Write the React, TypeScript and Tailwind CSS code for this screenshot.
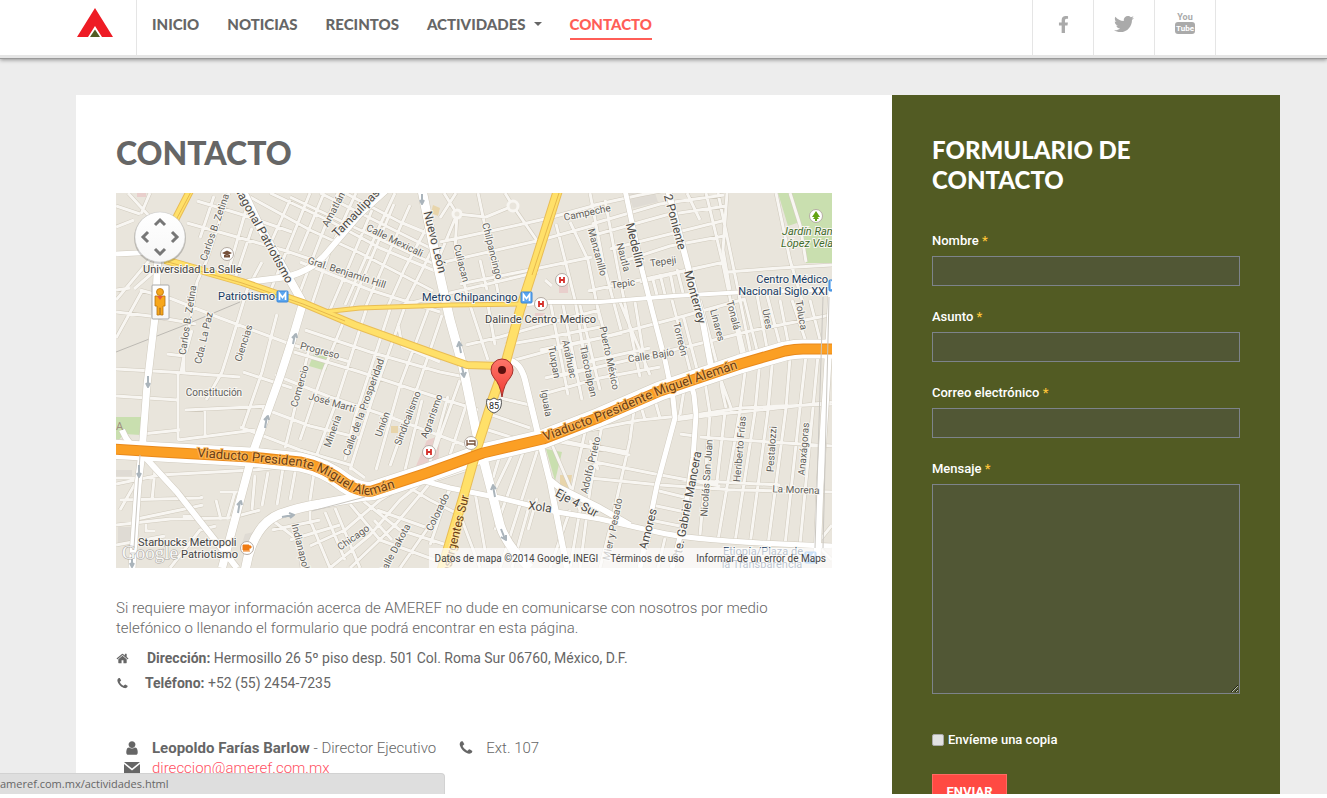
import { FaFacebookF, FaTwitter } from "react-icons/fa";

const HOME =
  "M1472 992v480q0 26-19 45t-45 19h-384v-384h-256v384h-384q-26 0-45-19t-19-45v-480q0-1 .5-3t.5-3l575-474 575 474q1 2 1 6zm223-69l-62 74q-8 9-21 11h-3q-13 0-21-7l-692-577-692 577q-12 8-24 7-13-2-21-11l-62-74q-8-10-7-23.5t11-21.5l719-599q32-26 76-26t76 26l244 204v-195q0-14 9-23t23-9h192q14 0 23 9t9 23v408l219 182q10 8 11 21.5t-7 23.5z";
const PHONE =
  "M1600 1240q0 27-10 70.5t-21 68.5q-21 50-122 106-94 51-186 51-27 0-53-3.5t-57.5-12.5-47-14.5-55.5-20.5-49-18q-98-35-175-83-127-79-264-216t-216-264q-48-77-83-175-3-9-18-49t-20.5-55.5-14.5-47-12.5-57.5-3.5-53q0-92 51-186 56-101 106-122 25-11 68.5-21t70.5-10q14 0 21 3 18 6 53 76 11 19 30 54t35 63.5 31 53.5q3 4 17.5 25t21.5 35.5 7 28.5q0 20-28.5 50t-62 55-62 53-28.5 46q0 9 5 22.5t8.5 20.5 14 24 11.5 19q76 137 174 235t235 174q2 1 19 11.5t24 14 20.5 8.5 22.5 5q18 0 46-28.5t53-62 55-62 50-28.5q14 0 28.5 7t35.5 21.5 25 17.5q25 15 53.5 31t63.5 35 54 30q70 35 76 53 3 7 3 21z";
const USER =
  "M1536 1399q0 109-62.5 187t-150.5 78h-854q-88 0-150.5-78t-62.5-187q0-85 8.5-160.5t31.5-152 58.5-131 94-89 134.5-34.5q131 128 313 128t313-128q76 0 134.5 34.5t94 89 58.5 131 31.5 152 8.5 160.5zm-256-887q0 159-112.5 271.5t-271.5 112.5-271.5-112.5-112.5-271.5 112.5-271.5 271.5-112.5 271.5 112.5 112.5 271.5z";

function Icon({ d, className }: { d: string; className: string }) {
  return (
    <svg viewBox="0 0 1792 1792" className={className} fill="currentColor" aria-hidden="true">
      <path d={d} />
    </svg>
  );
}

const minorRoads = [
  // north west
  "M116 227L134 220M116 206L140 214M128 193L150 217M150 193L141 214M187 223L283 250L310 259M197 201L240 214L292 232M116 300L158 250M116 338L142 291M134 289L158 268",
  "M229 193L206 262L197 282L181 372M252 228L236 276M246 210L228 272M214 196L200 238M262 262L247 290L229 350L222 372L206 400",
  "M116 312L150 316L196 324M140 290L172 299L220 318L290 344L350 362M130 288L116 290M116 369L170 372L240 377M167 354L184 356L184 372M192 330L186 352",
  "M277 314L262 372L243 427M116 396L178 400M178 372L178 440M142 434L180 430M185 410L270 406M205 410L205 436M178 440L255 430M243 372L292 388",
  // condesa streets
  "M310 193L289 245L270 292M324 193L300 251M338 193L310 265L297 300M356 193L330 250L310 310M290 200L272 240M372 210L345 275L330 310M394 204L360 285L350 310",
  "M250 197L310 230L360 253L433 291M270 193L330 221L380 248L440 273M290 197L360 230L432 263M320 193L372 219L440 253M345 193L400 222L434 236",
  "M395 193L380 225L345 305M410 205L390 250L366 306M428 225L405 268L388 306M432 250L412 290L404 306M300 262L370 290L440 312",
  // below the avenue
  "M345 318L323 372L300 440M366 310L337 400L314 462M390 309L354 420L345 460M404 309L372 400L350 470M428 310L400 385L376 470M442 315L420 380L390 466",
  "M305 330L370 352L440 372L470 378M294 352L360 372L430 395L478 410M275 375L330 397L390 417L470 447M262 408L310 426L360 438M240 427L300 450L350 465",
  "M310 345L292 420L285 448M398 323L402 346L440 362M448 396L430 462M470 393L450 455M460 380L435 450M422 400L405 470",
  // hipodromo roundabouts
  "M457 214L486 217L513 206M457 214L444 193M457 214L455 250L470 305M513 206L505 193M513 206L540 245M457 214L440 255M456 193L440 218M478 193L490 250L500 303",
  "M440 242L500 229L545 219L600 204M440 263L497 250L541 240L595 225M460 284L525 271L592 257M400 306L450 293L538 272M466 345L500 337L560 320L600 310",
  "M470 305L488 360M488 305L495 345M505 345L545 338L600 327M515 360L570 345L622 333M480 260L487 290M545 280L552 286",
  // roma sur
  "M556 224L575 300L590 390M570 222L588 260L600 320M590 193L603 262L621 330M605 200L618 270L640 377M550 300L568 395M563 305L582 400M580 305L600 390M597 305L618 385",
  "M590 206L640 195L720 180M592 224L660 204L724 195M598 234L666 215L726 206M610 249L690 229L726 220M621 262L670 246L724 236M588 291L640 280L725 262M640 282L680 272L724 262",
  "M706 193L722 260L745 370M718 193L736 280L752 360M727 193L723 250L730 290M687 193L700 220M645 280L650 299M652 276L658 299M660 274L666 299M670 272L675 298M677 269L684 297",
  "M540 350L600 338L673 319L745 299M555 377L620 362L690 346L750 331L830 315M540 395L600 378L660 367M585 362L650 348M620 302L650 375M635 302L646 370M672 300L690 370M683 315L698 373M700 300L718 368",
  "M732 300L745 355M744 298L757 350M757 295L767 348M767 295L780 345M780 300L788 342M792 300L806 342M810 300L820 340M727 272L780 268L832 265M776 193L790 260L802 300M790 193L800 225L806 262",
  // escandon south
  "M116 484L160 475L253 470L300 465M120 500L200 498L203 497M155 470L152 500M116 525L170 519L230 518L260 510M116 545L165 536M146 524L146 531L155 531M183 516L200 517M220 492L240 492M235 492L227 520M216 500L221 520",
  "M116 478L136 478M120 510L140 475M132 520L180 510L203 505M255 475L252 510M268 472L262 506M283 468L277 505M296 467L290 500M170 568L200 530L216 526",
  "M315 466L310 500L310 520L330 568M272 520L298 540L302 568M272 530L320 520M325 512L345 560M335 508L360 568M350 504L380 540L435 560M362 500L400 530L456 548M290 540L340 525",
  "M310 546L345 530L380 500L410 482M330 568L370 535L400 500L425 480M350 568L395 525L430 483M400 568L430 525L450 490M377 510L425 527M374 520L392 540M435 480L465 470M405 485L430 500L460 515",
  "M450 487L430 545M475 492L485 550M462 520L480 568M365 478L350 467M540 442L500 568M525 447L495 530M514 450L490 500M500 455L493 478M528 510L512 568M537 498L528 530M570 510L550 568",
  "M500 398L530 405M492 415L530 428M488 430L520 440M545 378L590 368M545 437L630 455M560 442L605 450M590 430L640 420L680 416M590 445L627 452M585 460L650 473L720 486",
  // narvarte
  "M634 410L630 440L612 520L600 568M603 420L590 490L580 568M585 432L570 500M640 403L645 420M654 397L660 418M684 390L680 415M671 394L673 410M550 440L580 510L570 568",
  "M655 490L688 498M652 505L685 512M650 520L685 527M680 434L695 436M700 437L740 440L832 446M590 478L660 485L735 490L832 492M680 480L780 485",
  "M675 418L740 408L832 404M675 420L720 414L750 411L832 402M720 375L722 390L726 408M718 372L730 405L732 412M745 372L740 410L718 540M760 360L755 412L735 542M773 355L768 410L750 545",
  "M790 358L786 408L768 545M806 355L800 408L785 545M818 355L800 545M705 382L710 414L705 480L700 535M725 412L716 490M590 440L598 470M665 538L658 568M650 536L640 568M820 540L832 525M820 548L832 560",
];

const majorRoads = [
  { w: 7, d: "M158 255L155 317L147 385L142 452L138 485L132 568" },
  { w: 8, d: "M240 185L260 227L303 303L292 340L280 377L253 452L238 508L222 568" },
  { w: 6, d: "M390 187L360 214L325 255Q312 270 287 277L247 282" },
  { w: 6, d: "M122 430Q128 445 143 455L177 492L237 568" },
  { w: 5, d: "M116 254L158 252" },
  { w: 9, d: "M422 190L437 263L450 320L463 367L477 435L490 485L500 525Q506 545 530 568" },
  { w: 5, d: "M625 190L642 270L652 310L665 360L673 398L675 418L657 485L640 568" },
  { w: 6, d: "M668 190L687 263L703 323L712 372" },
  { w: 5, d: "M690 380L694 395L696 415L693 458L683 525L672 568" },
  { w: 4, d: "M527 304L550 302L600 302L673 296L745 292L832 290" },
  { w: 6, d: "M505 360Q520 360 525 380L540 442L550 482L567 568" },
  { w: 5, d: "M417 479L450 488L500 498L557 512L600 519L657 532Q700 542 832 546" },
  { w: 6, d: "M550 480L560 488L600 508L630 525" },
  { w: 7, d: "M832 290L827 377L820 485L817 560" },
  { w: 9, d: "M245 572Q252 525 280 514Q300 507 320 504L365 496" },
];

const ORANGE =
  "M110 449L160 452L250 457L300 462Q325 467 345 483Q360 493 372 491L427 473L483 453L543 439L600 417L660 391L740 364L785 351Q795 349 803 349L840 349";

const yellowRoads = [
  { w: 8, d: "M192 187L175 220L164 258" },
  { w: 8, d: "M165 260L242 282L303 303L355 325L430 352L467 365L500 366" },
  { w: 5, d: "M303 303L323 312L360 308L450 305L523 304" },
  { w: 10, d: "M559 187L532 273L520 310L505 365L493 398L478 445L463 498L441 572" },
];

type Label = [string, number, number, number, number];

// text, centre x, centre y, angle, size
const streets: Label[] = [
  ["Carlos B. Zetina", 214, 227, -71, 10],
  ["Amatlán", 333, 209, -62, 10],
  ["Gral. Benjamín Hill", 347, 272, 18, 10],
  ["Carlos B. Zetina", 187, 320, -81, 10],
  ["Cda. La Paz", 203, 338, -77, 10],
  ["Ciencias", 243, 343, -72, 10],
  ["Progreso", 320, 350, 15, 10],
  ["Constitución", 214, 392, 0, 10],
  ["Comercio", 299, 386, -74, 10],
  ["José Martí", 332, 402, 16, 10],
  ["Mineria", 332, 431, -70, 10],
  ["Calle de la Prosperidad", 363, 407, -70, 10],
  ["Unión", 382, 424, -70, 10],
  ["Sindicalismo", 407, 418, -69, 10],
  ["Agrarismo", 431, 416, -70, 10],
  ["Calle Mexicali", 395, 240, 26, 10],
  ["Culiacan", 462, 263, 76, 10],
  ["Chilpancingo", 493, 251, 76, 10],
  ["Campeche", 587, 212, -12, 10],
  ["Manzanillo", 598, 252, 75, 10],
  ["Nautla", 624, 257, 75, 10],
  ["Tepeji", 663, 261, -8, 10],
  ["Tepic", 623, 283, -8, 10],
  ["Linares", 718, 325, 75, 10],
  ["Tonalá", 734, 315, 75, 10],
  ["Ures", 768, 319, 80, 10],
  ["Toluca", 802, 315, 80, 10],
  ["Torreón", 681, 339, 76, 10],
  ["Calle Bajío", 651, 355, -9, 10],
  ["Puerto México", 610, 358, 78, 10],
  ["Tuxpan", 555, 362, 80, 10],
  ["Anáhuac", 570, 359, 78, 10],
  ["Tlacotalpan", 589, 371, 78, 10],
  ["Iguala", 547, 403, 80, 10],
  ["Adolfo Prieto", 590, 465, -77, 10],
  ["Colorado", 437, 512, -64, 10],
  ["Calle Dakota", 394, 549, -62, 10],
  ["Chicago", 353, 537, -35, 10],
  ["Indianapolis", 302, 550, 76, 10],
  ["Mier y Pesado", 612, 529, -78, 10],
  ["Nicolás San Juan", 706, 478, -86, 10],
  ["Heriberto Frías", 739, 449, -85, 10],
  ["Pestalozzi", 771, 449, -86, 10],
  ["Anaxágoras", 803, 449, -85, 10],
  ["La Morena", 796, 489, 2, 10],
];

const avenues: Label[] = [
  ["Diagonal Patriotismo", 263, 233, 61, 12],
  ["Tamaulipas", 356, 213, -46, 12],
  ["Nuevo León", 435, 242, 76, 12],
  ["Medellín", 635, 245, 76, 12],
  ["2 Poniente", 675, 222, 75, 12],
  ["Monterrey", 695, 297, 75, 12],
  ["Xola", 540, 507, 8, 12],
  ["Eje 4 Sur", 577, 503, 28, 12],
  ["Amores", 648, 529, -76, 12],
  ["Pte. Gabriel Mancera", 687, 506, -79, 12],
];

function MapLabels({ items, fill }: { items: Label[]; fill: string }) {
  return (
    <g fill={fill} stroke="#f8f6f1" strokeWidth="2" paintOrder="stroke" textAnchor="middle">
      {items.map(([text, x, y, angle, size], i) => (
        <text key={i} fontSize={size} transform={`translate(${x} ${y}) rotate(${angle})`} dy="4">
          {text}
        </text>
      ))}
    </g>
  );
}

function Hospital({ x, y }: { x: number; y: number }) {
  return (
    <g>
      <circle cx={x} cy={y} r="6.5" fill="#fff" stroke="#b5aca4" />
      <path d={`M${x - 2} ${y - 3}v6M${x + 2} ${y - 3}v6M${x - 2} ${y}h4`} stroke="#d5302b" strokeWidth="1.8" fill="none" />
    </g>
  );
}

function Metro({ x, y }: { x: number; y: number }) {
  return (
    <g>
      <rect x={x} y={y} width="11" height="11" rx="1" fill="#5aa5ef" stroke="#3a86d8" />
      <path d={`M${x + 2.5} ${y + 9}v-6.5l3 4 3-4v6.5`} stroke="#fff" strokeWidth="1.7" fill="none" />
    </g>
  );
}

function CityMap() {
  return (
    <svg
      viewBox="116 193 716 375"
      preserveAspectRatio="xMidYMid slice"
      className="block h-full w-full font-['Roboto',sans-serif]"
      role="img"
      aria-label="Mapa"
    >
      <rect x="0" y="0" width="1400" height="800" fill="#e9e5dc" />
      <g fill="#c9dfaf">
        <path d="M778 193H832V263H806L800 222L788 226Z" />
        <path d="M116 417H141V435L124 434L116 443Z" />
        <path d="M314 353L330 357L326 371L309 366Z" />
        <path d="M546 449L562 452L555 481Z" />
        <path d="M588 503L600 505V509Z" />
      </g>
      <g fill="#e9cfcc">
        <path d="M427 440L440 436L438 465L416 466Z" />
        <rect x="559" y="276" width="9" height="17" />
        <path d="M137 193H146V197H137Z" />
        <rect x="535" y="313" width="10" height="10" />
      </g>
      <g fill="#dfdbd4">
        <path d="M628 193H655L658 202L633 208Z" />
        <rect x="116" y="470" width="16" height="10" />
        <rect x="118" y="527" width="14" height="16" />
        <path d="M245 534L262 530L252 555L240 550Z" />
      </g>
      <path d="M560 475h12l-2 16h-10zM433 205l7 3-2 8-7-3zM391 426h7v7h-7z" fill="#e8d5ab" />

      <g fill="none" strokeLinejoin="round">
        <path d={minorRoads.join("")} stroke="#d0cabd" strokeWidth="4" />
        <path d={minorRoads.join("")} stroke="#f8f6f2" strokeWidth="3" />
        <circle cx="457" cy="214" r="4" fill="#e9e5dc" stroke="#f8f6f2" strokeWidth="3" />
        <circle cx="513" cy="206" r="5" fill="#e9e5dc" stroke="#f8f6f2" strokeWidth="3" />
        <path d="M116 352L180 327L240 302" stroke="#bcb9b3" strokeWidth="1" />
        {majorRoads.map((r) => (
          <path key={r.d} d={r.d} stroke="#d0cabd" strokeWidth={r.w + 1} />
        ))}
        <path d={ORANGE} stroke="#d0cabd" strokeWidth="20" />
        <path d={ORANGE} stroke="#fff" strokeWidth="19" />
        {majorRoads.map((r) => (
          <path key={r.d} d={r.d} stroke="#fff" strokeWidth={r.w} />
        ))}
        {yellowRoads.map((r) => (
          <path key={r.d} d={r.d} stroke="#e9bd55" strokeWidth={r.w} />
        ))}
        {yellowRoads.map((r) => (
          <path key={r.d} d={r.d} stroke="#ffe069" strokeWidth={r.w - 2} />
        ))}
        <path d="M168 262L242 283L303 304L345 321M559 193L532 275M192 190L176 220" stroke="#e6b84d" strokeWidth="1" />
        <path d={ORANGE} stroke="#e8891c" strokeWidth="11" />
        <path d={ORANGE} stroke="#fb9f24" strokeWidth="9" />
        <path d="M823 297L815 548M829 297L823 548M312 511L365 497M140 455L134 548" stroke="#c9c6c0" strokeWidth="1" />
        <path
          d="M422 194v9m-2-3l2 4 2-4M461 353l-2-10m-2 4l2-5 3 4M462 367l2 9m-3-3l3 4 2-5M293 344l2-10m-3 4l4-4 1 4M148 376v10m-2-3l2 4 2-4M265 428l2-12m-3 4l4-4 1 4M238 513l2-12m-3 4l4-4 1 4M139 465v11m-2-3l2 4 2-4M132 557v9m-2-3l2 4 2-4M282 517l11-2m-4-2l5 2-4 3M495 497l-2-11m-2 4l2-5 3 4M501 529l4 10m-4-2l5 3v-5"
          stroke="#aab4bb"
          strokeWidth="2"
        />
      </g>

      <MapLabels items={streets} fill="#625f5b" />
      <MapLabels items={avenues} fill="#4a4845" />

      <defs>
        <path id="viaducto-oeste" d="M197 457L250 461L297 466Q322 470 343 486Q360 498 375 494L430 477" />
        <path id="viaducto-este" d="M545 441L602 420L662 394L742 367L790 354" />
      </defs>
      <g fill="#6a3c12" stroke="#fbb85c" strokeWidth="2" paintOrder="stroke" fontSize="13">
        <text>
          <textPath href="#viaducto-oeste">Viaducto Presidente Miguel Alemán</textPath>
        </text>
        <text>
          <textPath href="#viaducto-este">Viaducto Presidente Miguel Alemán</textPath>
        </text>
        <text fontSize="12" textAnchor="end" stroke="#ffe69a" transform="translate(469 496) rotate(-76)">
          Insurgentes Sur
        </text>
      </g>
      <text x="116" y="430" fontSize="11" fill="#a08f7f">A</text>

      <g stroke="#f8f6f1" strokeWidth="2" paintOrder="stroke" fontSize="11">
        <g fill="#444">
          <text x="143" y="273">Universidad La Salle</text>
          <text x="485" y="323">Dalinde Centro Medico</text>
          <text x="138" y="546">Starbucks Metropoli</text>
          <text x="181" y="558">Patriotismo</text>
        </g>
        <g fill="#173a63">
          <text x="218" y="300">Patriotismo</text>
          <text x="422" y="301">Metro Chilpancingo</text>
          <text x="828" y="283" textAnchor="end">Centro Médico</text>
          <text x="828" y="295" textAnchor="end">Nacional Siglo XXI</text>
          <text x="763" y="555" textAnchor="middle">Etiopía/Plaza de</text>
          <text x="762" y="568" textAnchor="middle">la Transparencia</text>
        </g>
        <g fill="#3f6b2b" fontStyle="italic">
          <text x="782" y="235">Jardín Ramón</text>
          <text x="781" y="247">López Velarde</text>
        </g>
      </g>

      <Metro x={277} y={291} />
      <Metro x={521} y={292} />
      <Metro x={829} y={280} />
      <Metro x={805} y={552} />
      <Hospital x={562} y={280} />
      <Hospital x={541} y={304} />
      <Hospital x={429} y={452} />
      <g fill="#fff" stroke="#b5aca4">
        <circle cx="227" cy="254" r="6.5" />
        <circle cx="471" cy="443" r="6.5" />
        <circle cx="247" cy="548" r="6.5" />
        <circle cx="816" cy="216" r="6.5" />
      </g>
      <path d="M222 253l5-2.500 5 2.500-5 2.500zM224 255v2.500h6v-2.500" fill="#76503a" />
      <path d="M467 440v6M467 444h8v2M469 441h6v3" stroke="#76503a" strokeWidth="1.300" fill="none" />
      <path d="M243 545h6v5h-6zM249 546h2v2h-2M243 551h7" stroke="#ef7b13" fill="#ef7b13" />
      <path d="M816 211l4 6h-2.500l1.500 2h-2v2h-2v-2h-2l1.500-2h-2.500z" fill="#63a313" />

      <path d="M487 399l3 1 4-2 4 2 3-1q1 4 0 7-1 5-7 7-6-2-7-7-1-3 0-7z" fill="#fff" stroke="#555" />
      <text x="494" y="409" fontSize="9" fill="#222" textAnchor="middle">85</text>

      <defs>
        <linearGradient id="pin" x1="0" y1="0" x2="0" y2="1">
          <stop offset="0" stopColor="#ff776b" />
          <stop offset="1" stopColor="#ef3b33" />
        </linearGradient>
        <linearGradient id="shade" x1="0" y1="0" x2="0" y2="1">
          <stop offset="0" stopColor="#fff" />
          <stop offset="1" stopColor="#f7f7f7" />
        </linearGradient>
      </defs>
      <path d="M502 397Q500 384 494 378Q491 374 491 370A11 11 0 0 1 513 370Q513 374 510 378Q504 384 502 397Z" fill="url(#pin)" stroke="#a4302b" />
      <circle cx="502" cy="370" r="4" fill="#5c100e" />

      {/* pan control */}
      <circle cx="160" cy="238" r="26" fill="#000" opacity="0.2" />
      <circle cx="160" cy="237" r="25" fill="url(#shade)" stroke="#cfcfcf" strokeWidth="0.500" />
      <path
        d="M155 225l5-5 5 5M155 249l5 5 5-5M148 232l-5 5 5 5M172 232l5 5-5 5"
        fill="none"
        stroke="#777"
        strokeWidth="3"
      />
      {/* street view */}
      <rect x="152" y="285" width="17" height="34" rx="1" fill="url(#shade)" stroke="#aaa" />
      <g fill="#f7a71b" stroke="#b8720c" strokeWidth="0.800">
        <path d="M155 296h10v10h-2v9h-2.500v-7h-1v7h-2.500v-9h-2z" />
        <circle cx="160" cy="292" r="3.500" />
      </g>
      <path d="M157 296h6l-3 4z" fill="#e8583a" />

      <text x="122" y="559" fontSize="19" fill="#f7f7f7" stroke="#a9a69f" strokeWidth="1" paintOrder="stroke" fontFamily="Liberation Serif, serif">
        Google
      </text>
    </svg>
  );
}

function Navbar() {
  return (
    <header className="relative flex h-[59px] shrink-0 justify-between border-b border-[#999] bg-white pl-[76px] pr-[111px] shadow-[0_1px_4px_rgba(0,0,0,0.4)]">
      <div className="flex">
        <a href="#" aria-label="AMEREF" className="flex h-[55px] w-[61px] items-start border-r border-[#e5e5e5] pt-2">
          <svg viewBox="0 0 38 30" className="h-[30px] w-[38px]">
            <path d="M19 0L37 29H26L19 18L12 29H1Z" fill="#ee1c25" />
            <path d="M19 21.500L24 29H14Z" fill="#525b23" />
          </svg>
        </a>
        <nav className="flex items-start gap-7 pl-[15px] pt-[14px] font-['Lato',sans-serif] text-[15px] font-black leading-5 text-[#666]">
          <a href="#">INICIO</a>
          <a href="#">NOTICIAS</a>
          <a href="#">RECINTOS</a>
          <a href="#" className="flex items-center gap-2">
            ACTIVIDADES
            <span className="border-x-4 border-t-4 border-x-transparent border-t-[#666]"></span>
          </a>
          <a href="#" className="border-b-2 border-[#ff5e57] pb-1 text-[#ff5e57]">
            CONTACTO
          </a>
        </nav>
      </div>
      <div className="flex h-[55px] divide-x divide-[#e5e5e5] border-x border-[#e5e5e5] text-[#aaa]">
        <a href="#" aria-label="Facebook" className="flex w-[61px] items-start justify-center pt-4">
          <FaFacebookF className="h-[17px] w-[17px]" />
        </a>
        <a href="#" aria-label="Twitter" className="flex w-[61px] items-start justify-center pt-[14px]">
          <FaTwitter className="h-5 w-5" />
        </a>
        <a href="#" aria-label="YouTube" className="flex w-[60px] items-start justify-center pt-3">
          <svg viewBox="0 0 20 22" className="h-[22px] w-5" fill="currentColor">
            <g fontFamily="Roboto, sans-serif" fontWeight="bold" textAnchor="middle">
              <text x="10" y="8" fontSize="9">You</text>
              <rect x="0" y="10" width="20" height="12" rx="3" />
              <text x="10" y="19" fontSize="8" fill="#fff">Tube</text>
            </g>
          </svg>
        </a>
      </div>
      <div className="absolute inset-x-0 bottom-0 h-[3px] bg-[#e5e5e5]"></div>
    </header>
  );
}

function Field({ id, label }: { id: string; label: string }) {
  return (
    <div className="mb-[21px]">
      <label htmlFor={id} className="mb-[5px] block leading-5">
        {label} <span className="text-[#fcc437]">*</span>
      </label>
      <input id={id} type="text" className="block h-[30px] w-full border border-[#7d838a] bg-[#515735] px-2 outline-none" />
    </div>
  );
}

function ContactForm() {
  return (
    <aside className="w-[388px] shrink-0 bg-[#525b23] p-10 text-white">
      <h2 className="mb-9 font-['Lato',sans-serif] text-2xl font-black leading-[30px]">FORMULARIO DE CONTACTO</h2>
      <form className="text-[13px] font-medium">
        <Field id="nombre" label="Nombre" />
        <Field id="asunto" label="Asunto" />
        <Field id="correo" label="Correo electrónico" />
        <label htmlFor="mensaje" className="mb-[5px] block leading-5">
          Mensaje <span className="text-[#fcc437]">*</span>
        </label>
        <textarea id="mensaje" className="block h-[210px] w-full resize border border-[#7d838a] bg-[#515735] p-2 outline-none"></textarea>
        <div className="mt-9 flex items-center gap-1 leading-5">
          <input
            id="copia"
            type="checkbox"
            className="h-3 w-3 appearance-none rounded-xs border border-[#aaa] bg-[#e2e2e2] checked:bg-[#ff4a43]"
          />
          <label htmlFor="copia">Envíeme una copia</label>
        </div>
        <button type="submit" className="mt-6 h-9 w-[75px] border border-[#ff6a63] bg-[#ff4a43] font-bold">
          ENVIAR
        </button>
      </form>
    </aside>
  );
}

function App() {
  return (
    <div className="h-screen bg-white pb-1">
      <div className="relative flex h-full flex-col overflow-hidden bg-[#ededed] font-['Roboto',sans-serif] text-[#666]">
        <Navbar />
        <main className="flex pl-[76px] pr-[47px] pt-9">
          <section className="min-w-0 flex-1 bg-white py-10 pl-10 pr-[60px]">
            <h1 className="mb-[22px] font-['Lato',sans-serif] text-[32px] font-black leading-9">CONTACTO</h1>
            <div className="relative h-[375px]">
              <CityMap />
              <div className="absolute bottom-0 right-0 flex h-5 items-center gap-3 bg-white/70 px-1.5 text-[10px] text-[#444]">
                <span>Datos de mapa ©2014 Google, INEGI</span>
                <a href="#">Términos de uso</a>
                <a href="#">Informar de un error de Maps</a>
              </div>
            </div>
            <p className="mb-[10px] mt-[30px] text-[15px] font-light leading-5">
              Si requiere mayor información acerca de AMEREF no dude en comunicarse con nosotros por medio telefónico o
              llenando el formulario que podrá encontrar en esta página.
            </p>
            <ul className="space-y-[5px] text-sm leading-5">
              <li className="flex items-center gap-[18px]">
                <Icon d={HOME} className="h-[13px] w-[13px]" />
                <span>
                  <b>Dirección:</b> Hermosillo 26 5º piso desp. 501 Col. Roma Sur 06760, México, D.F.
                </span>
              </li>
              <li className="flex items-center gap-4">
                <Icon d={PHONE} className="h-[13px] w-[13px]" />
                <span>
                  <b>Teléfono:</b> +52 (55) 2454-7235
                </span>
              </li>
            </ul>
            <div className="mt-[45px] pl-2 text-[15px] font-light leading-5">
              <div className="flex items-center">
                <Icon d={USER} className="mr-3 h-4 w-4" />
                <span>
                  <b className="font-bold">Leopoldo Farías Barlow</b> - Director Ejecutivo
                </span>
                <Icon d={PHONE} className="ml-[22px] mr-3 h-4 w-4" />
                <span>Ext. 107</span>
              </div>
              <div className="flex items-center">
                <svg viewBox="0 0 16 12" className="mr-3 h-3 w-4" fill="currentColor">
                  <path d="M0 0H16L8 6.500ZM0 2L8 8.500L16 2V12H0Z" />
                </svg>
                <a href="#" className="text-[#ff5263]">
                  direccion@ameref.com.mx
                </a>
              </div>
            </div>
          </section>
          <ContactForm />
        </main>
        <div className="absolute bottom-0 left-0 h-[21px] w-[445px] rounded-tr border-t border-r border-[#d2d2d2] bg-[#dedede] font-['Open_Sans',sans-serif] text-[11px] leading-5">
          ameref.com.mx/actividades.html
        </div>
      </div>
    </div>
  );
}

export default App;
